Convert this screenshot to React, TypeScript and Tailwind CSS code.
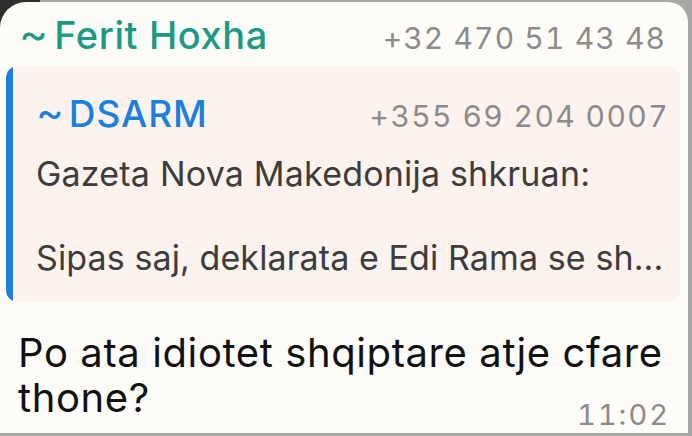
import React from "react";

export default function App() {
  return (
    <div
      className="w-[692px] h-[436px] overflow-hidden bg-[#a9a7a6] relative"
      style={{ fontFamily: "Inter, 'Noto Sans', sans-serif" }}
    >
      <div className="absolute left-0 top-0 w-[40px] h-[40px] bg-[#2e2e2e]" />
      <div className="relative mt-[2px] w-[688px] h-[431px] bg-[#fdfcf9] rounded-tl-[26px] rounded-tr-[20px] flex flex-col">
        <div className="flex items-baseline justify-between pl-[19px] pr-[22px] pt-[11px] h-[64px]">
          <span className="text-[#1d9a82] text-[38px] leading-[40px] font-medium tracking-[0.6px] flex items-baseline">
            <span className="text-[44px] font-normal mr-[6px] tracking-normal">~</span>Ferit Hoxha
          </span>
          <span className="text-[#8b8b8b] text-[30px] leading-[40px] tabular-nums tracking-[1.1px]">+32 470 51 43 48</span>
        </div>
        <div className="ml-[6px] mr-[8px] h-[236px] bg-[#fcf2ee] rounded-[12px] flex overflow-hidden">
          <div className="w-[7px] bg-[#1b7fdc] shrink-0" />
          <div className="flex-1 flex flex-col pl-[23px] pr-[11px]">
            <div className="flex items-baseline justify-between pt-[26px] h-[75px]">
              <span className="text-[#1b7fdc] text-[37px] leading-[40px] font-medium tracking-[0.9px] flex items-baseline">
                <span className="text-[42px] font-normal mr-[5px] tracking-normal">~</span>DSARM
              </span>
              <span className="text-[#8b8b8b] text-[30px] leading-[40px] tabular-nums tracking-[1.4px]">+355 69 204 0007</span>
            </div>
            <div className="text-[#3c3c3c] text-[34px] leading-[42px] tracking-[0.2px] mt-[12px]">Gazeta Nova Makedonija shkruan:</div>
            <div className="h-[42px]" />
            <div className="text-[#3c3c3c] text-[34px] leading-[42px] tracking-[0.1px]">Sipas saj, deklarata e Edi Rama se sh...</div>
          </div>
        </div>
        <div className="pl-[18px] pr-[20px] pt-[28px] text-[#111111] text-[40px] leading-[45px] tracking-[0.6px]">
          Po ata idiotet shqiptare atje cfare
          <br />
          thone?
        </div>
        <div className="absolute right-[18px] bottom-[0px] text-[#8b8b8b] text-[29px] leading-[36px] tabular-nums tracking-[2px]">11:02</div>
      </div>
    </div>
  );
}
